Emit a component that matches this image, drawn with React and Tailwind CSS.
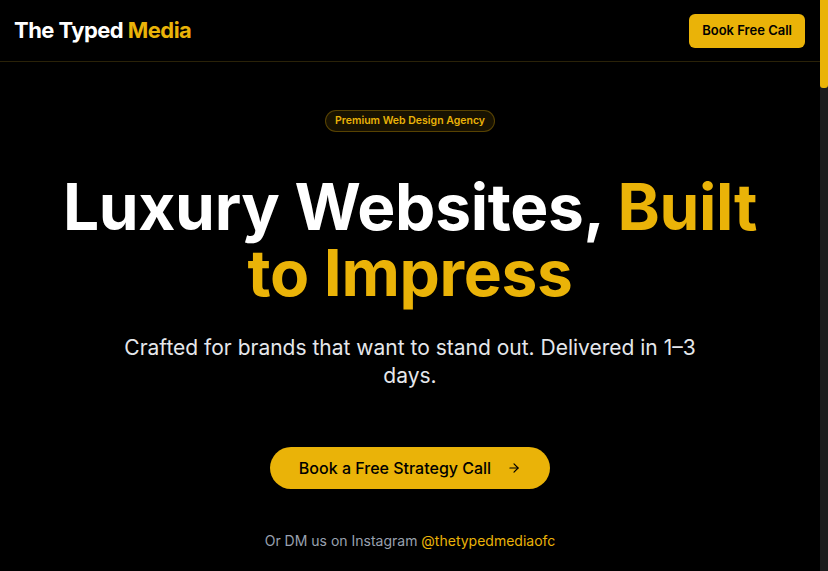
import React from 'react';
import { ArrowRight } from 'lucide-react';

export default function App() {
  return (
    <div className="h-screen flex bg-black text-white overflow-hidden [font-family:Inter,'Liberation_Sans',sans-serif]">
      <div className="flex-1 min-w-0">
        <header className="h-[62px] flex items-center justify-between pl-[14px] pr-[15px] border-b border-[#2a2208]">
          <div className="text-[22px] font-bold tracking-[-0.025em]">
            The Typed <span className="text-[#eab308]">Media</span>
          </div>
          <button className="h-[34px] px-[13px] rounded-md bg-[#eab308] text-black text-[13px] font-semibold">
            Book Free Call
          </button>
        </header>

        <section className="flex flex-col items-center text-center pt-[48px]">
          <span className="px-[9px] py-[2px] rounded-full border border-[#eab308]/30 bg-[#eab308]/10 text-[#eab308] text-[10.5px] font-semibold">
            Premium Web Design Agency
          </span>

          <h1 className="mt-[42px] max-w-[720px] text-[64px] leading-[66px] font-bold tracking-[-0.005em]">
            Luxury Websites, <span className="text-[#eab308]">Built to Impress</span>
          </h1>

          <p className="mt-[28px] max-w-[600px] text-[21px] leading-[28px] text-gray-200">
            Crafted for brands that want to stand out. Delivered in 1–3 days.
          </p>

          <button className="mt-[57px] h-[42px] px-[29px] rounded-full bg-[#eab308] text-black text-[16px] font-medium flex items-center gap-[16px]">
            Book a Free Strategy Call
            <ArrowRight className="w-[14px] h-[14px]" strokeWidth={2} />
          </button>

          <p className="mt-[41px] text-[14px] text-gray-400">
            Or DM us on Instagram <span className="text-[#eab308]">@thetypedmediaofc</span>
          </p>
        </section>
      </div>
      <div className="w-[8px] shrink-0 bg-[#1c1c1c] flex flex-col">
        <div className="h-[88px] bg-[#eab308] rounded-b-[3px]" />
      </div>
    </div>
  );
}
